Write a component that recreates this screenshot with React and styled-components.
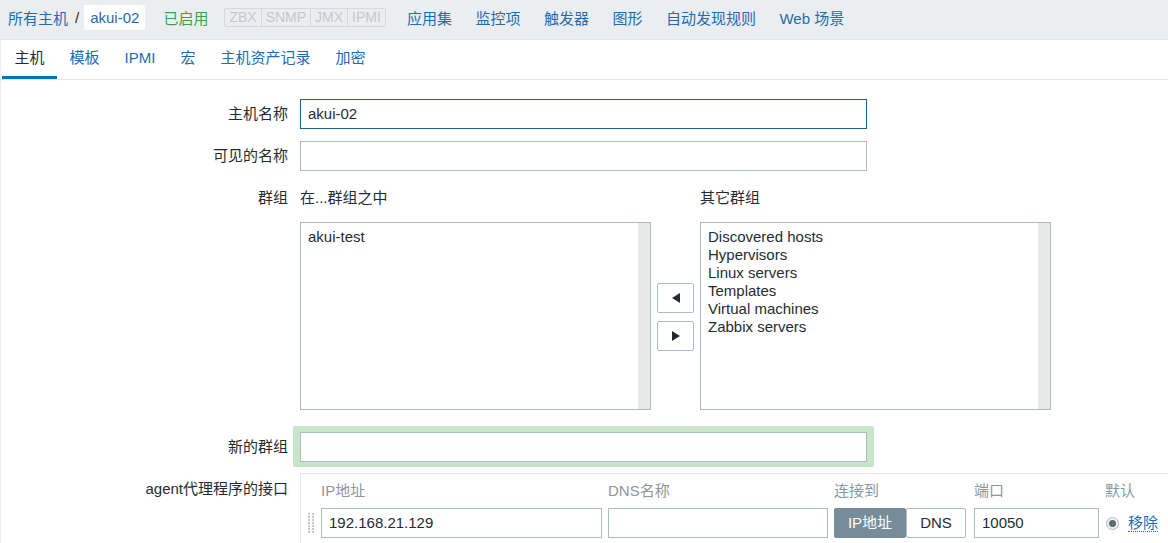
import React from "react";
import styled, { createGlobalStyle } from "styled-components";

const GlobalStyle = createGlobalStyle`
  html, body {
    margin: 0;
    padding: 0;
    background: #ffffff;
    font-family: "Liberation Sans", Arial, "Noto Sans CJK SC", sans-serif;
    font-size: 15px;
    color: #1f2c33;
  }
  * { box-sizing: border-box; }
`;

const Page = styled.div`
  width: 1168px;
  height: 543px;
  overflow: hidden;
  background: #ebeef0;
`;

const TopBar = styled.div`
  height: 40px;
  display: flex;
  align-items: center;
  padding: 0 0 4px 8px;
  border-bottom: 1px solid #dfe4e7;
`;

const Crumb = styled.a`
  color: #1e6bb0;
  text-decoration: none;
`;

const Slash = styled.span`
  margin: 0 5px 0 7px;
  color: #1f2c33;
`;

const CurrentHost = styled.span`
  background: #ffffff;
  border-radius: 2px;
  padding: 0 6px;
  height: 25px;
  line-height: 25px;
  color: #1e6bb0;
`;

const Status = styled.span`
  color: #429e47;
  margin-left: 18px;
`;

const Badges = styled.div`
  display: flex;
  margin-left: 16px;
  border: 1px solid #d4d9dc;
  border-radius: 2px;
  height: 19px;
`;

const Badge = styled.span`
  font-size: 14px;
  color: #c2c8cc;
  padding: 0 4px;
  line-height: 17px;
  border-left: ${(p) => (p.$first ? "none" : "1px solid #d4d9dc")};
`;

const NavLinks = styled.div`
  display: flex;
  gap: 23.5px;
  margin-left: 21px;
`;

const Content = styled.div`
  background: #ffffff;
  margin-left: 1px;
  height: 100%;
`;

const Tabs = styled.div`
  display: flex;
  height: 40px;
  border-bottom: 1px solid #e4e8eb;
  padding-left: 1px;
`;

const Tab = styled.div`
  padding: 0 12.5px;
  line-height: 36px;
  border-bottom: 3px solid ${(p) => (p.$active ? "#0275b8" : "transparent")};
  color: ${(p) => (p.$active ? "#1f2c33" : "#1e6bb0")};
`;

const Form = styled.div`
  padding-top: 19px;
`;

const Row = styled.div`
  display: grid;
  grid-template-columns: 287px 1fr;
  column-gap: 12px;
  margin-top: ${(p) => p.$top || 0}px;
`;

const Label = styled.div`
  text-align: right;
  line-height: ${(p) => p.$lh || 30}px;
  color: #1f2c33;
`;

const TextInput = styled.div`
  width: ${(p) => p.$w || 567}px;
  height: 30px;
  line-height: 28px;
  border: 1px solid ${(p) => (p.$focus ? "#1f5f94" : "#acbbc2")};
  padding: 0 7px;
  background: #ffffff;
  color: #1f2c33;
`;

const GroupsGrid = styled.div`
  display: grid;
  grid-template-columns: 351px 37px 351px;
  column-gap: 6px;
`;

const ColHead = styled.div`
  line-height: 24px;
  margin-bottom: 12px;
  grid-column: ${(p) => p.$col};
`;

const ListBox = styled.div`
  height: 188px;
  border: 1px solid #acbbc2;
  display: flex;
`;

const ListItems = styled.div`
  flex: 1;
  padding: 5px 7px;
  line-height: 18px;
`;

const ScrollTrack = styled.div`
  width: 12px;
  background: #e8e8e8;
`;

const Arrows = styled.div`
  display: flex;
  flex-direction: column;
  justify-content: center;
  gap: 8px;
  padding-top: 2px;
`;

const ArrowBtn = styled.div`
  height: 30px;
  border: 1px solid #acbbc2;
  border-radius: 2px;
  background: #ffffff;
  display: flex;
  align-items: center;
  justify-content: center;
`;

const NewGroupWrap = styled.div`
  width: 581px;
  margin-left: -7px;
  padding: 6px 7px 5px;
  background: #c8e4c9;
  border-radius: 2px;
`;

const InterfaceBox = styled.div`
  border-top: 1px solid #e4e8eb;
  border-left: 1px solid #e4e8eb;
  padding: 6px 0 0 7px;
  height: 80px;
`;

const IfaceGrid = styled.div`
  display: grid;
  grid-template-columns: 7px 281px 220px 134px 125px auto;
  column-gap: 6px;
  row-gap: 6px;
  align-items: center;
`;

const IfaceHead = styled.div`
  color: #8b979e;
  line-height: 22px;
`;

const Handle = styled.div`
  display: flex;
  align-items: center;
  height: 30px;
`;

const Toggle = styled.div`
  display: flex;
  height: 30px;
`;

const ToggleBtn = styled.div`
  width: ${(p) => p.$w}px;
  line-height: 28px;
  text-align: center;
  border: 1px solid ${(p) => (p.$on ? "#768d99" : "#acbbc2")};
  background: ${(p) => (p.$on ? "#768d99" : "#ffffff")};
  color: ${(p) => (p.$on ? "#ffffff" : "#1f2c33")};
  border-radius: 2px;
`;

const DefaultCell = styled.div`
  display: flex;
  align-items: center;
  gap: 9px;
  padding-left: 1px;
`;

const Radio = styled.span`
  width: 13px;
  height: 13px;
  border-radius: 50%;
  border: 1px solid #acbbc2;
  background: #f1f1f1;
  display: flex;
  align-items: center;
  justify-content: center;
  &::after {
    content: "";
    width: 7px;
    height: 7px;
    border-radius: 50%;
    background: #5f6a70;
  }
`;

const RemoveLink = styled.a`
  color: #1e6bb0;
  text-decoration: none;
  border-bottom: 1px dotted #1e6bb0;
  line-height: 17px;
`;

const Tri = ({ dir }) => (
  <svg width="8" height="10" viewBox="0 0 8 10">
    {dir === "left" ? (
      <polygon points="8,0 8,10 0,5" fill="#1f2c33" />
    ) : (
      <polygon points="0,0 0,10 8,5" fill="#1f2c33" />
    )}
  </svg>
);

const DragDots = () => (
  <svg width="7" height="22" viewBox="0 0 7 22">
    {[0, 1, 2, 3, 4, 5, 6].map((r) =>
      [0, 1].map((c) => (
        <rect key={`${r}-${c}`} x={c * 4} y={r * 3 + 1} width="2" height="2" fill="#c3cacd" />
      ))
    )}
  </svg>
);

const navItems = ["应用集", "监控项", "触发器", "图形", "自动发现规则", "Web 场景"];
const tabs = ["主机", "模板", "IPMI", "宏", "主机资产记录", "加密"];
const otherGroups = [
  "Discovered hosts",
  "Hypervisors",
  "Linux servers",
  "Templates",
  "Virtual machines",
  "Zabbix servers",
];

export default function App() {
  return (
    <Page>
      <GlobalStyle />
      <TopBar>
        <Crumb>所有主机</Crumb>
        <Slash>/</Slash>
        <CurrentHost>akui-02</CurrentHost>
        <Status>已启用</Status>
        <Badges>
          {["ZBX", "SNMP", "JMX", "IPMI"].map((b, i) => (
            <Badge key={b} $first={i === 0}>{b}</Badge>
          ))}
        </Badges>
        <NavLinks>
          {navItems.map((n) => (
            <Crumb key={n}>{n}</Crumb>
          ))}
        </NavLinks>
      </TopBar>
      <Content>
        <Tabs>
          {tabs.map((t, i) => (
            <Tab key={t} $active={i === 0}>{t}</Tab>
          ))}
        </Tabs>
        <Form>
          <Row>
            <Label>主机名称</Label>
            <TextInput $focus>akui-02</TextInput>
          </Row>
          <Row $top={12}>
            <Label>可见的名称</Label>
            <TextInput />
          </Row>
          <Row $top={15}>
            <Label $lh={24}>群组</Label>
            <GroupsGrid>
              <ColHead $col="1">在...群组之中</ColHead>
              <ColHead $col="3">其它群组</ColHead>
              <ListBox>
                <ListItems>akui-test</ListItems>
                <ScrollTrack />
              </ListBox>
              <Arrows>
                <ArrowBtn><Tri dir="left" /></ArrowBtn>
                <ArrowBtn><Tri dir="right" /></ArrowBtn>
              </Arrows>
              <ListBox>
                <ListItems>
                  {otherGroups.map((g) => (
                    <div key={g}>{g}</div>
                  ))}
                </ListItems>
                <ScrollTrack />
              </ListBox>
            </GroupsGrid>
          </Row>
          <Row $top={16}>
            <Label $lh={41}>新的群组</Label>
            <NewGroupWrap>
              <TextInput />
            </NewGroupWrap>
          </Row>
          <Row $top={6}>
            <Label $lh={32}>agent代理程序的接口</Label>
            <InterfaceBox>
              <IfaceGrid>
                <span />
                <IfaceHead>IP地址</IfaceHead>
                <IfaceHead>DNS名称</IfaceHead>
                <IfaceHead>连接到</IfaceHead>
                <IfaceHead>端口</IfaceHead>
                <IfaceHead>默认</IfaceHead>
                <Handle><DragDots /></Handle>
                <TextInput $w={281}>192.168.21.129</TextInput>
                <TextInput $w={220} />
                <Toggle>
                  <ToggleBtn $on $w={72}>IP地址</ToggleBtn>
                  <ToggleBtn $w={60}>DNS</ToggleBtn>
                </Toggle>
                <TextInput $w={125}>10050</TextInput>
                <DefaultCell>
                  <Radio />
                  <RemoveLink>移除</RemoveLink>
                </DefaultCell>
              </IfaceGrid>
            </InterfaceBox>
          </Row>
        </Form>
      </Content>
    </Page>
  );
}
